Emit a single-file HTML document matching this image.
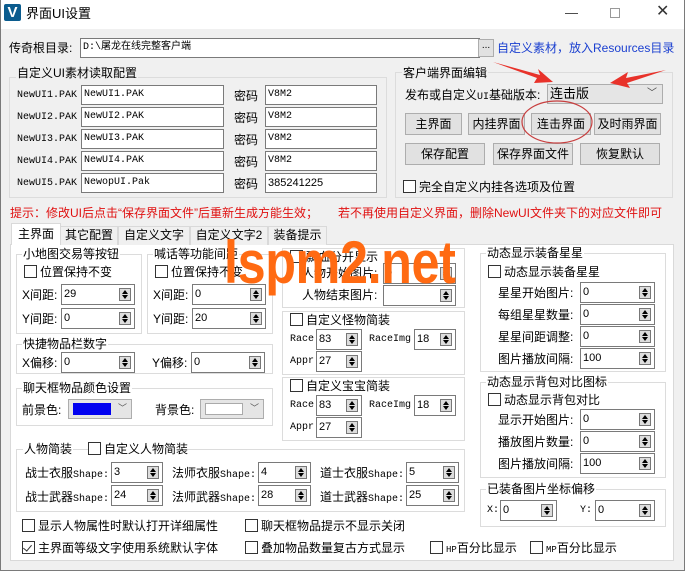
<!DOCTYPE html>
<html><head><meta charset="utf-8"><style>
*{margin:0;padding:0;box-sizing:border-box}
body{width:685px;height:571px;overflow:hidden;background:#f0f0f0;font-family:"Liberation Sans","Noto Sans CJK SC",sans-serif;font-size:12px;color:#000;position:relative}
.a{position:absolute;white-space:nowrap;line-height:14px}
.tb{position:absolute;left:0;top:0;width:685px;height:29px;background:#fff}
.win{position:absolute;left:0;top:0;width:685px;height:571px;border:1px solid #7a7a7a;border-top:none}
.in{position:absolute;height:20px;background:#fff;border:1px solid #7a7a7a;line-height:18px;padding-left:2px;font-family:"Liberation Mono","Noto Sans CJK SC",monospace;font-size:10px}
.grp{position:absolute;border:1px solid #dcdcdc}
.gt{position:absolute;background:#f0f0f0;padding:0 1px;line-height:14px;white-space:nowrap}
.btn{position:absolute;height:22px;background:#e1e1e1;border:1px solid #adadad;text-align:center;line-height:20px;font-size:12px}
.cb{position:absolute;white-space:nowrap;line-height:14px;padding-left:16px}
.cb::before{content:"";position:absolute;left:0;top:0;width:13px;height:13px;border:1px solid #333;background:#fff;box-sizing:border-box}
.ck::after{content:"";position:absolute;left:3px;top:2px;width:4px;height:7px;border:solid #333;border-width:0 1.5px 1.5px 0;transform:rotate(40deg)}
.sp{position:absolute;height:21px;background:#fff;border:1px solid #7a7a7a;line-height:18px;padding-left:2px;font-size:11px}
.sp i{position:absolute;right:3px;top:3px;width:12px;height:13px;border:1px solid #777;background:#ddd}
.sp i::before{content:"";position:absolute;left:2px;top:1px;border:3px solid transparent;border-bottom:4px solid #000;border-top:0}
.sp i::after{content:"";position:absolute;left:2px;top:6px;border:3px solid transparent;border-top:4px solid #000;border-bottom:0}
.tab{position:absolute;top:226px;height:19px;border:1px solid #d9d9d9;border-bottom:none;background:#f0f0f0;text-align:center;line-height:17px;font-size:12px}
.mono{font-family:"Liberation Mono","Noto Sans CJK SC",monospace;font-size:10px}
</style></head><body>
<div class="tb"></div>
<div class="win"></div>
<div style="position:absolute;left:4px;top:4px;width:17px;height:17px;background:#0b5c8e;border-radius:2px;color:#fff;font-weight:bold;font-size:15px;line-height:17px;text-align:center">V</div>
<div class="a" style="left:26px;top:7px;font-size:13px">界面UI设置</div>
<div class="a" style="left:565px;top:6px;font-size:13px;color:#333">—</div>
<div style="position:absolute;left:610px;top:8px;width:10px;height:10px;border:1px solid #999"></div>
<div class="a" style="left:656px;top:5px;font-size:16px;color:#333">✕</div>

<div class="a" style="left:9px;top:41px;font-size:12px">传奇根目录:</div>
<div class="in" style="left:80px;top:38px;width:400px">D:\屠龙在线完整客户端</div>
<div style="position:absolute;left:478px;top:39px;width:16px;height:18px;background:#e1e1e1;border:1px solid #adadad;font-size:10px;text-align:center;line-height:12px">...</div>
<div class="a" style="left:497px;top:41px;color:#1a3fd0;font-size:12px">自定义素材，放入Resources目录</div>

<div class="grp" style="left:9px;top:77px;width:378px;height:121px"></div>
<div class="gt" style="left:16px;top:66px;font-size:12px">自定义UI素材读取配置</div>
<div class="a mono" style="left:17px;top:89px">NewUI1.PAK</div><div class="in" style="left:81px;top:85px;width:143px">NewUI1.PAK</div><div class="a" style="left:234px;top:89px">密码</div><div class="in" style="left:265px;top:85px;width:112px">V8M2</div>
<div class="a mono" style="left:17px;top:111px">NewUI2.PAK</div><div class="in" style="left:81px;top:107px;width:143px">NewUI2.PAK</div><div class="a" style="left:234px;top:111px">密码</div><div class="in" style="left:265px;top:107px;width:112px">V8M2</div>
<div class="a mono" style="left:17px;top:133px">NewUI3.PAK</div><div class="in" style="left:81px;top:129px;width:143px">NewUI3.PAK</div><div class="a" style="left:234px;top:133px">密码</div><div class="in" style="left:265px;top:129px;width:112px">V8M2</div>
<div class="a mono" style="left:17px;top:155px">NewUI4.PAK</div><div class="in" style="left:81px;top:151px;width:143px">NewUI4.PAK</div><div class="a" style="left:234px;top:155px">密码</div><div class="in" style="left:265px;top:151px;width:112px">V8M2</div>
<div class="a mono" style="left:17px;top:177px">NewUI5.PAK</div><div class="in" style="left:81px;top:173px;width:143px">NewopUI.Pak</div><div class="a" style="left:234px;top:177px">密码</div><div class="in" style="left:265px;top:173px;width:112px;font-family:'Liberation Sans',sans-serif;font-size:11px">385241225</div>

<div class="grp" style="left:395px;top:72px;width:278px;height:126px"></div>
<div class="gt" style="left:402px;top:66px;font-size:12px">客户端界面编辑</div>
<div class="a" style="left:405px;top:88px">发布或自定义<span class="mono">UI</span>基础版本:</div>
<div style="position:absolute;left:547px;top:84px;width:116px;height:20px;background:#e5e5e5;border:1px solid #adadad;font-size:13px;line-height:18px;padding-left:2px">连击版<span style="position:absolute;right:5px;top:0;font-size:10px;color:#444">﹀</span></div>
<div class="btn" style="left:405px;top:113px;width:57px">主界面</div>
<div class="btn" style="left:468px;top:113px;width:57px">内挂界面</div>
<div class="btn" style="left:531px;top:113px;width:60px">连击界面</div>
<div class="btn" style="left:594px;top:113px;width:67px">及时雨界面</div>
<div class="btn" style="left:405px;top:143px;width:80px">保存配置</div>
<div class="btn" style="left:493px;top:143px;width:80px">保存界面文件</div>
<div class="btn" style="left:580px;top:143px;width:80px">恢复默认</div>
<div class="cb" style="left:403px;top:180px">完全自定义内挂各选项及位置</div>
<svg style="position:absolute;left:0;top:0" width="685" height="571">
<ellipse cx="557" cy="122" rx="35" ry="21" fill="none" stroke="#c84040" stroke-width="1.2"/>
<path d="M493 62 L540 75 L538 69 L553 82 L534 83 L537 78 Z" fill="#e8322a"/>
<path d="M666 70 L626 78 L628 72 L610 83 L630 88 L627 83 Z" fill="#e8322a"/>
</svg>

<div class="a" style="left:10px;top:206px;color:#e01010;font-size:12px">提示：修改UI后点击“保存界面文件”后重新生成方能生效；&nbsp;&nbsp;&nbsp;&nbsp;&nbsp;&nbsp;若不再使用自定义界面，删除NewUI文件夹下的对应文件即可</div>

<div style="position:absolute;left:10px;top:244px;width:664px;height:317px;border:1px solid #d9d9d9;background:#fff"></div>
<div class="tab" style="left:60px;width:58px">其它配置</div>
<div class="tab" style="left:118px;width:72px">自定义文字</div>
<div class="tab" style="left:190px;width:78px">自定义文字2</div>
<div class="tab" style="left:268px;width:59px">装备提示</div>
<div class="tab" style="left:11px;top:223px;width:50px;height:22px;background:#fff;border-color:#d9d9d9;line-height:20px">主界面</div>

<div class="grp" style="left:16px;top:254px;width:126px;height:80px"></div><div class="gt" style="left:22px;top:247px;background:#fff">小地图交易等按钮</div>
<div class="cb" style="left:24px;top:265px">位置保持不变</div>
<div class="a" style="left:22px;top:288px">X间距:</div><div class="sp" style="left:61px;top:284px;width:74px">29<i></i></div>
<div class="a" style="left:22px;top:312px">Y间距:</div><div class="sp" style="left:61px;top:308px;width:74px">0<i></i></div>

<div class="grp" style="left:147px;top:254px;width:126px;height:80px"></div><div class="gt" style="left:153px;top:247px;background:#fff">喊话等功能间距</div>
<div class="cb" style="left:155px;top:265px">位置保持不变</div>
<div class="a" style="left:153px;top:288px">X间距:</div><div class="sp" style="left:192px;top:284px;width:74px">0<i></i></div>
<div class="a" style="left:153px;top:312px">Y间距:</div><div class="sp" style="left:192px;top:308px;width:74px">20<i></i></div>

<div class="grp" style="left:16px;top:344px;width:257px;height:30px"></div><div class="gt" style="left:22px;top:337px;background:#fff">快捷物品栏数字</div>
<div class="a" style="left:22px;top:356px">X偏移:</div><div class="sp" style="left:61px;top:352px;width:74px">0<i></i></div>
<div class="a" style="left:152px;top:356px">Y偏移:</div><div class="sp" style="left:191px;top:352px;width:74px">0<i></i></div>

<div class="grp" style="left:16px;top:388px;width:257px;height:38px"></div><div class="gt" style="left:22px;top:381px;background:#fff">聊天框物品颜色设置</div>
<div class="a" style="left:22px;top:403px">前景色:</div>
<div style="position:absolute;left:68px;top:399px;width:64px;height:20px;border:1px solid #adadad;background:#e5e5e5"><div style="position:absolute;left:4px;top:3px;width:38px;height:12px;background:#0000f0"></div><span style="position:absolute;right:4px;top:1px;font-size:9px;color:#555">﹀</span></div>
<div class="a" style="left:155px;top:403px">背景色:</div>
<div style="position:absolute;left:200px;top:399px;width:64px;height:20px;border:1px solid #adadad;background:#e5e5e5"><div style="position:absolute;left:4px;top:3px;width:38px;height:12px;background:#fff;border:1px solid #aaa"></div><span style="position:absolute;right:4px;top:1px;font-size:9px;color:#555">﹀</span></div>

<div class="grp" style="left:282px;top:248px;width:183px;height:60px"></div>
<div class="cb" style="left:290px;top:250px;background:#fff">飘血分开显示</div>
<div class="a" style="left:302px;top:266px">人物开始图片:</div><div class="sp" style="left:383px;top:263px;width:73px">0<i></i></div>
<div class="a" style="left:302px;top:288px">人物结束图片:</div><div class="sp" style="left:383px;top:285px;width:73px"><i></i></div>

<div class="grp" style="left:282px;top:311px;width:183px;height:64px"></div>
<div class="cb" style="left:290px;top:313px;background:#fff">自定义怪物简装</div>
<div class="a mono" style="left:290px;top:333px">Race</div><div class="sp" style="left:316px;top:329px;width:46px">83<i></i></div>
<div class="a mono" style="left:369px;top:333px">RaceImg</div><div class="sp" style="left:414px;top:329px;width:42px">18<i></i></div>
<div class="a mono" style="left:290px;top:355px">Appr</div><div class="sp" style="left:316px;top:351px;width:46px">27<i></i></div>

<div class="grp" style="left:282px;top:377px;width:183px;height:64px"></div>
<div class="cb" style="left:290px;top:379px;background:#fff">自定义宝宝简装</div>
<div class="a mono" style="left:290px;top:399px">Race</div><div class="sp" style="left:316px;top:395px;width:46px">83<i></i></div>
<div class="a mono" style="left:369px;top:399px">RaceImg</div><div class="sp" style="left:414px;top:395px;width:42px">18<i></i></div>
<div class="a mono" style="left:290px;top:421px">Appr</div><div class="sp" style="left:316px;top:417px;width:46px">27<i></i></div>

<div class="grp" style="left:16px;top:449px;width:449px;height:63px"></div>
<div class="gt" style="left:23px;top:442px;background:#fff">人物简装</div>
<div class="cb" style="left:88px;top:442px;background:#fff">自定义人物简装</div>
<div class="a" style="left:25px;top:466px">战士衣服<span class="mono">Shape:</span></div><div class="sp" style="left:111px;top:462px;width:52px">3<i></i></div>
<div class="a" style="left:172px;top:466px">法师衣服<span class="mono">Shape:</span></div><div class="sp" style="left:258px;top:462px;width:53px">4<i></i></div>
<div class="a" style="left:320px;top:466px">道士衣服<span class="mono">Shape:</span></div><div class="sp" style="left:406px;top:462px;width:53px">5<i></i></div>
<div class="a" style="left:25px;top:490px">战士武器<span class="mono">Shape:</span></div><div class="sp" style="left:111px;top:485px;width:52px">24<i></i></div>
<div class="a" style="left:172px;top:490px">法师武器<span class="mono">Shape:</span></div><div class="sp" style="left:258px;top:485px;width:53px">28<i></i></div>
<div class="a" style="left:320px;top:490px">道士武器<span class="mono">Shape:</span></div><div class="sp" style="left:406px;top:485px;width:53px">25<i></i></div>

<div class="grp" style="left:480px;top:253px;width:186px;height:119px"></div><div class="gt" style="left:486px;top:246px;background:#fff">动态显示装备星星</div>
<div class="cb" style="left:488px;top:265px">动态显示装备星星</div>
<div class="a" style="left:498px;top:286px">星星开始图片:</div><div class="sp" style="left:580px;top:282px;width:75px">0<i></i></div>
<div class="a" style="left:498px;top:308px">每组星星数量:</div><div class="sp" style="left:580px;top:304px;width:75px">0<i></i></div>
<div class="a" style="left:498px;top:330px">星星间距调整:</div><div class="sp" style="left:580px;top:326px;width:75px">0<i></i></div>
<div class="a" style="left:498px;top:352px">图片播放间隔:</div><div class="sp" style="left:580px;top:348px;width:75px">100<i></i></div>

<div class="grp" style="left:480px;top:382px;width:186px;height:96px"></div><div class="gt" style="left:486px;top:375px;background:#fff">动态显示背包对比图标</div>
<div class="cb" style="left:488px;top:393px">动态显示背包对比</div>
<div class="a" style="left:498px;top:413px">显示开始图片:</div><div class="sp" style="left:580px;top:409px;width:75px">0<i></i></div>
<div class="a" style="left:498px;top:435px">播放图片数量:</div><div class="sp" style="left:580px;top:431px;width:75px">0<i></i></div>
<div class="a" style="left:498px;top:457px">图片播放间隔:</div><div class="sp" style="left:580px;top:453px;width:75px">100<i></i></div>

<div class="grp" style="left:480px;top:489px;width:186px;height:38px"></div><div class="gt" style="left:486px;top:482px;background:#fff">已装备图片坐标偏移</div>
<div class="a mono" style="left:487px;top:504px">X:</div><div class="sp" style="left:500px;top:500px;width:57px">0<i></i></div>
<div class="a mono" style="left:580px;top:504px">Y:</div><div class="sp" style="left:595px;top:500px;width:60px">0<i></i></div>

<div class="cb" style="left:22px;top:519px">显示人物属性时默认打开详细属性</div>
<div class="cb" style="left:245px;top:519px">聊天框物品提示不显示关闭</div>
<div class="cb ck" style="left:22px;top:541px">主界面等级文字使用系统默认字体</div>
<div class="cb" style="left:245px;top:541px">叠加物品数量复古方式显示</div>
<div class="cb" style="left:430px;top:541px"><span class="mono" style="font-size:9px">HP</span>百分比显示</div>
<div class="cb" style="left:530px;top:541px"><span class="mono" style="font-size:9px">MP</span>百分比显示</div>

<div class="a" style="left:224px;top:228px;font-size:60px;line-height:70px;font-weight:bold;color:#ff6a12;transform:scaleX(0.84);transform-origin:0 0;letter-spacing:-0.5px">lspm2.net</div>
</body></html>
